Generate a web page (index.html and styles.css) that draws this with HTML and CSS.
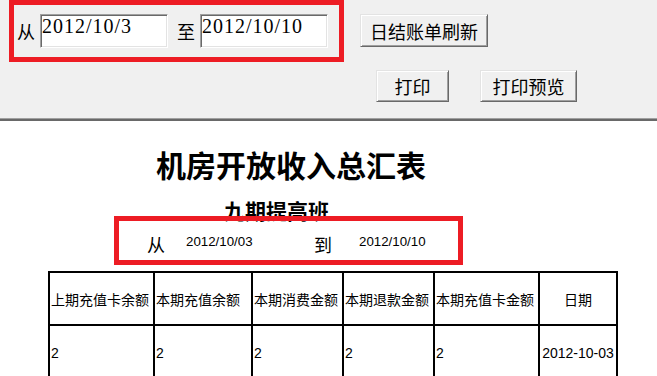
FILE: index.html
```html
<!DOCTYPE html>
<html lang="zh-CN">
<head>
    <meta charset="UTF-8">
    <meta name="viewport" content="width=device-width, initial-scale=1.0">
    <title>机房开放收入总汇表</title>
    <link rel="stylesheet" href="styles.css">
</head>
<body>

    <div class="toolbar">
        <div class="toolbar-row">
            <span class="range-label">从</span>
            <input type="text" class="date-input" value="2012/10/3">
            <span class="range-label to">至</span>
            <input type="text" class="date-input" value="2012/10/10">
            <button class="win-button refresh">日结账单刷新</button>
        </div>
        <div class="toolbar-row print-row">
            <button class="win-button print">打印</button>
            <button class="win-button preview">打印预览</button>
        </div>
        <div class="mark mark-toolbar"></div>
    </div>
    <div class="divider"></div>

    <div class="report">
        <h1 class="report-title">机房开放收入总汇表</h1>
        <h2 class="report-subtitle">九期提高班</h2>

        <div class="report-range">
            <span class="range-word">从</span>
            <span class="range-date first">2012/10/03</span>
            <span class="range-word to">到</span>
            <span class="range-date last">2012/10/10</span>
        </div>

        <table class="summary">
            <tr class="head-row">
                <th class="c1">上期充值卡余额</th>
                <th class="c2">本期充值余额</th>
                <th class="c3">本期消费金额</th>
                <th class="c4">本期退款金额</th>
                <th class="c5">本期充值卡金额</th>
                <th class="c6 center">日期</th>
            </tr>
            <tr class="data-row">
                <td>2</td>
                <td>2</td>
                <td>2</td>
                <td>2</td>
                <td>2</td>
                <td class="center">2012-10-03</td>
            </tr>
        </table>

        <div class="mark mark-range"></div>
    </div>

</body>
</html>
```

FILE: styles.css
```css
body {
    margin: 0;
    font-family: "Liberation Sans", "Noto Sans CJK SC", sans-serif;
    color: #000;
    background-color: #fff;
    overflow: hidden;
}

.toolbar {
    position: relative;
    height: 118px;
    box-sizing: border-box;
    padding-top: 14px;
    background-color: #f0f0f0;
}

.divider {
    border-top: 1px solid #a0a0a0;
    border-bottom: 2px solid #696969;
}

.toolbar-row {
    display: flex;
    align-items: flex-start;
    padding-left: 17px;
}

.range-label {
    width: 18px;
    margin-right: 5px;
    font-family: "Noto Sans CJK SC", sans-serif;
    font-size: 18px;
    line-height: 34px;
}

.range-label.to {
    margin-left: 9px;
}

.date-input {
    width: 128px;
    height: 34px;
    box-sizing: border-box;
    margin: 0;
    padding: 0 1px 10px 1px;
    border: 1px solid;
    border-color: #a0a0a0 #fff #fff #a0a0a0;
    box-shadow: inset 1px 1px #696969, inset -1px -1px #e3e3e3;
    background-color: #fff;
    font-family: "Liberation Serif", serif;
    font-size: 20px;
    line-height: 20px;
    letter-spacing: 1px;
    color: #000;
    outline: none;
}

.win-button {
    height: 33px;
    box-sizing: border-box;
    margin: 0;
    padding: 0;
    border: 1px solid;
    border-color: #e3e3e3 #696969 #696969 #e3e3e3;
    box-shadow: inset 1px 1px #fff, inset -1px -1px #a0a0a0;
    background-color: #f0f0f0;
    font-family: "Noto Sans CJK SC", sans-serif;
    font-size: 18px;
    line-height: 20px;
    color: #000;
}

.refresh {
    width: 128px;
    margin-left: 32px;
}

.print-row {
    margin-top: 22px;
    padding-left: 376px;
}

.print {
    width: 73px;
    height: 32px;
}

.preview {
    width: 97px;
    height: 32px;
    margin-left: 31px;
}

/* red annotation frames drawn over the screenshot */
.mark {
    position: absolute;
    box-sizing: border-box;
    border: 5px solid #ed1c24;
}

.mark-toolbar {
    top: 0;
    left: 9px;
    width: 335px;
    height: 62px;
}

.mark-range {
    top: 95px;
    left: 114px;
    width: 349px;
    height: 49px;
}

.report {
    position: relative;
    padding-top: 28px;
}

.report-title {
    margin: 0 0 0 156px;
    font-family: "Noto Sans CJK SC", serif;
    font-size: 30px;
    line-height: 30px;
    font-weight: bold;
}

.report-subtitle {
    margin: 21px 0 0 224px;
    font-family: "Noto Sans CJK SC", serif;
    font-size: 21px;
    line-height: 21px;
    font-weight: bold;
}

.report-range {
    display: flex;
    align-items: center;
    height: 29px;
    margin-top: 8px;
    padding-left: 147px;
}

.range-word {
    width: 18px;
    font-family: "Noto Sans CJK SC", sans-serif;
    font-size: 18px;
    line-height: 18px;
}

.range-word.to {
    margin-left: 61px;
}

.range-date {
    font-size: 13.3px;
    line-height: 14px;
    margin-bottom: 4px;
}

.range-date.first {
    width: 67px;
    margin-left: 21px;
}

.range-date.last {
    margin-left: 27px;
}

.summary {
    margin: 13px 0 0 48px;
    width: 570px;
    table-layout: fixed;
    border-collapse: separate;
    border-spacing: 0;
    border-right: 2px solid #000;
}

.summary th,
.summary td {
    box-sizing: border-box;
    padding: 0 1px;
    border-top: 2px solid #000;
    border-left: 2px solid #000;
    text-align: left;
    vertical-align: middle;
    white-space: nowrap;
    overflow: hidden;
}

.summary th {
    font-family: "Noto Sans CJK SC", sans-serif;
    font-size: 14px;
    font-weight: normal;
    line-height: 20px;
}

.summary td {
    font-size: 14px;
    line-height: 16px;
}

.summary .center {
    text-align: center;
}

.head-row {
    height: 53px;
}

.data-row {
    height: 56px;
}

.c1 { width: 105px; }
.c2 { width: 98px; }
.c3 { width: 91px; }
.c4 { width: 91px; }
.c5 { width: 105px; }
.c6 { width: 78px; }
```
